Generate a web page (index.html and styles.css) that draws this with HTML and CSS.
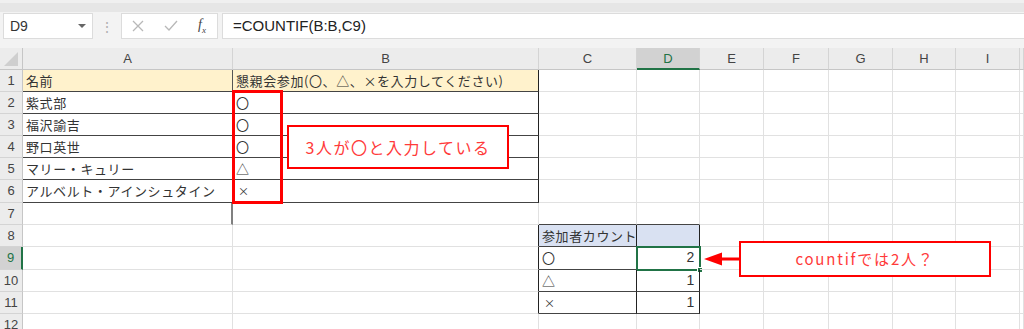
FILE: index.html
```html
<!DOCTYPE html>
<html lang="ja">
<head>
    <meta charset="UTF-8">
    <title>COUNTIF</title>
    <link rel="stylesheet" href="styles.css">
</head>
<body>
    <div class="topstrip"></div>
    <div class="formula-bar">
        <div class="namebox">
            <span>D9</span>
            <span class="drop"></span>
        </div>
        <div class="dots">⋮</div>
        <div class="fxbox">
            <svg width="12" height="12" viewBox="0 0 12 12"><path d="M1 1L11 11M11 1L1 11" stroke="#b8b8b8" stroke-width="1.3" fill="none"/></svg>
            <svg width="14" height="12" viewBox="0 0 14 12"><path d="M1 6L5 10L13 1" stroke="#b8b8b8" stroke-width="1.3" fill="none"/></svg>
            <span class="fx">f<sub>x</sub></span>
        </div>
        <div class="formula">=COUNTIF(B:B,C9)</div>
    </div>

    <div class="sheet">
        <!-- column headers -->
        <div class="ch corner"><span class="tri"></span></div>
        <div class="ch">A</div>
        <div class="ch">B</div>
        <div class="ch">C</div>
        <div class="ch sel">D</div>
        <div class="ch">E</div>
        <div class="ch">F</div>
        <div class="ch">G</div>
        <div class="ch">H</div>
        <div class="ch">I</div>
        <div class="ch"></div>

        <!-- 1 -->
        <div class="rh">1</div>
        <div class="c yel bb rb">名前</div>
        <div class="c yel bb rk">懇親会参加(〇、△、×を入力してください)</div>
        <div class="c"></div><div class="c"></div><div class="c"></div><div class="c"></div><div class="c"></div><div class="c"></div><div class="c"></div><div class="c"></div>
        <!-- 2 -->
        <div class="rh">2</div>
        <div class="c bb rb">紫式部</div>
        <div class="c bb rk">〇</div>
        <div class="c"></div><div class="c"></div><div class="c"></div><div class="c"></div><div class="c"></div><div class="c"></div><div class="c"></div><div class="c"></div>
        <!-- 3 -->
        <div class="rh">3</div>
        <div class="c bb rb">福沢諭吉</div>
        <div class="c bb rk">〇</div>
        <div class="c"></div><div class="c"></div><div class="c"></div><div class="c"></div><div class="c"></div><div class="c"></div><div class="c"></div><div class="c"></div>
        <!-- 4 -->
        <div class="rh">4</div>
        <div class="c bb rb">野口英世</div>
        <div class="c bb rk">〇</div>
        <div class="c"></div><div class="c"></div><div class="c"></div><div class="c"></div><div class="c"></div><div class="c"></div><div class="c"></div><div class="c"></div>
        <!-- 5 -->
        <div class="rh">5</div>
        <div class="c bb rb">マリー・キュリー</div>
        <div class="c bb rk">△</div>
        <div class="c"></div><div class="c"></div><div class="c"></div><div class="c"></div><div class="c"></div><div class="c"></div><div class="c"></div><div class="c"></div>
        <!-- 6 -->
        <div class="rh">6</div>
        <div class="c bb rb">アルベルト・アインシュタイン</div>
        <div class="c bb rk"><span class="small">×</span></div>
        <div class="c"></div><div class="c"></div><div class="c"></div><div class="c"></div><div class="c"></div><div class="c"></div><div class="c"></div><div class="c"></div>
        <!-- 7 -->
        <div class="rh">7</div>
        <div class="c rg"></div>
        <div class="c"></div>
        <div class="c bb"></div><div class="c bb"></div><div class="c"></div><div class="c"></div><div class="c"></div><div class="c"></div><div class="c"></div><div class="c"></div>
        <!-- 8 -->
        <div class="rh">8</div>
        <div class="c"></div>
        <div class="c rk"></div>
        <div class="c blue bb rk">参加者カウント</div>
        <div class="c blue bb rk"></div>
        <div class="c"></div><div class="c"></div><div class="c"></div><div class="c"></div><div class="c"></div><div class="c"></div>
        <!-- 9 -->
        <div class="rh sel">9</div>
        <div class="c"></div>
        <div class="c rk"></div>
        <div class="c bb rk">〇</div>
        <div class="c bb rk num active">2<span class="handle"></span></div>
        <div class="c"></div><div class="c"></div><div class="c"></div><div class="c"></div><div class="c"></div><div class="c"></div>
        <!-- 10 -->
        <div class="rh">10</div>
        <div class="c"></div>
        <div class="c rk"></div>
        <div class="c bb rk">△</div>
        <div class="c bb rk num">1</div>
        <div class="c"></div><div class="c"></div><div class="c"></div><div class="c"></div><div class="c"></div><div class="c"></div>
        <!-- 11 -->
        <div class="rh">11</div>
        <div class="c"></div>
        <div class="c rk"></div>
        <div class="c bb rk"><span class="small">×</span></div>
        <div class="c bb rk num">1</div>
        <div class="c"></div><div class="c"></div><div class="c"></div><div class="c"></div><div class="c"></div><div class="c"></div>
        <!-- 12 -->
        <div class="rh">12</div>
        <div class="c"></div><div class="c"></div><div class="c"></div><div class="c"></div><div class="c"></div><div class="c"></div><div class="c"></div><div class="c"></div><div class="c"></div><div class="c"></div>

        <!-- annotations -->
        <div class="mark"></div>
        <div class="note note-left">3人が〇と入力している</div>
        <svg class="arrow" width="36" height="16" viewBox="0 0 36 16"><path d="M0 8L18 1.5V6.5H36V9.5H18V14.5Z" fill="#ff0000"/></svg>
        <div class="note note-right">countifでは2人？</div>
    </div>
</body>
</html>
```

FILE: styles.css
```css
* {
    margin: 0;
    padding: 0;
    box-sizing: border-box;
}

body {
    width: 1024px;
    height: 329px;
    overflow: hidden;
    background: #ffffff;
    font-family: "Noto Sans CJK JP", "Noto Sans", sans-serif;
    color: #333333;
}

.topstrip {
    height: 12px;
    background: #e6e6e6;
    border-top: 3px solid #f0f0f0;
}

.formula-bar {
    height: 36px;
    background: #f3f3f3;
    display: flex;
    align-items: flex-start;
    padding-top: 1px;
    padding-left: 3px;
}

.namebox {
    width: 90px;
    height: 26px;
    background: #fff;
    border: 1px solid #dcdcdc;
    display: flex;
    align-items: center;
    justify-content: space-between;
    padding: 0 6px 0 6px;
    font-family: "Liberation Sans", sans-serif;
    font-size: 14px;
    color: #333;
}

.drop {
    width: 0;
    height: 0;
    border-left: 4px solid transparent;
    border-right: 4px solid transparent;
    border-top: 4px solid #666;
}

.dots {
    width: 28px;
    text-align: center;
    color: #b0b0b0;
    font-size: 14px;
    line-height: 26px;
}

.fxbox {
    width: 97px;
    height: 26px;
    background: #fff;
    border: 1px solid #dcdcdc;
    display: flex;
    align-items: center;
    gap: 20px;
    padding-left: 10px;
}

.fx {
    font-family: "Liberation Serif", serif;
    font-style: italic;
    font-size: 14px;
    color: #444;
}

.fx sub {
    font-size: 9px;
}

.formula {
    flex: 1;
    height: 26px;
    margin-left: 4px;
    background: #fff;
    border: 1px solid #dcdcdc;
    border-right: none;
    font-family: "Liberation Sans", sans-serif;
    font-size: 15px;
    line-height: 24px;
    padding-left: 10px;
    color: #222;
}

.sheet {
    position: relative;
    display: grid;
    grid-template-columns: 23px 210px 306px 98px 63px 64px 65px 64px 63px 64px 1fr;
    grid-template-rows: 22px 22px 22px 22px 22px 22px 23px 22px 22px 23px 22px 22px 22px;
}

.ch {
    background: #ececec;
    border-right: 1px solid #d4d4d4;
    border-bottom: 1px solid #c6c6c6;
    text-align: center;
    font-family: "Liberation Sans", sans-serif;
    font-size: 13px;
    line-height: 22px;
    color: #444;
}

.ch.sel {
    background: #d2d2d2;
    color: #217346;
    border-bottom: 2px solid #217346;
}

.corner {
    position: relative;
    border-right: 1px solid #c6c6c6;
}

.tri {
    position: absolute;
    right: 4px;
    bottom: 3px;
    width: 0;
    height: 0;
    border-left: 14px solid transparent;
    border-bottom: 14px solid #cfcfcf;
}

.rh {
    background: #ececec;
    border-right: 1px solid #c6c6c6;
    border-bottom: 1px solid #d4d4d4;
    text-align: center;
    font-family: "Liberation Sans", sans-serif;
    font-size: 13px;
    line-height: 22px;
    color: #444;
}

.rh.sel {
    background: #d2d2d2;
    color: #217346;
    border-right: 2px solid #217346;
}

.c {
    position: relative;
    border-right: 1px solid #e1e1e1;
    border-bottom: 1px solid #e1e1e1;
    font-size: 13px;
    letter-spacing: 0.6px;
    line-height: 21px;
    padding-left: 3px;
    white-space: nowrap;
    color: #333;
}

.c.yel {
    background: #fff2cc;
}

.c.blue {
    background: #d9e1f2;
}

.c.bb {
    border-bottom-color: #444;
}

.c.rb {
    border-right-color: #555;
}

.c.rk {
    border-right-color: #222;
}

.c.rg {
    border-right: 2px solid #808080;
}

.c.num {
    text-align: right;
    padding-right: 4px;
    font-family: "Liberation Sans", sans-serif;
    font-size: 14px;
}

.small {
    font-size: 11px;
    padding-left: 2px;
}

.active {
    outline: 2px solid #217346;
    outline-offset: -1px;
}

.handle {
    position: absolute;
    right: -4px;
    bottom: -4px;
    width: 6px;
    height: 6px;
    background: #217346;
    border: 1px solid #fff;
}

.mark {
    position: absolute;
    left: 232px;
    top: 42px;
    width: 51px;
    height: 114px;
    border: 3px solid #ff0000;
}

.note {
    position: absolute;
    background: #fff;
    border: 2px solid #ff0000;
    color: #ff3a3a;
    text-align: center;
    white-space: nowrap;
}

.note-left {
    left: 287px;
    top: 77px;
    width: 222px;
    height: 44px;
    font-size: 16px;
    letter-spacing: 1.5px;
    line-height: 40px;
}

.note-right {
    left: 739px;
    top: 193px;
    width: 252px;
    height: 36px;
    font-size: 15px;
    letter-spacing: 1.8px;
    line-height: 32px;
}

.arrow {
    position: absolute;
    left: 704px;
    top: 203px;
}
```
